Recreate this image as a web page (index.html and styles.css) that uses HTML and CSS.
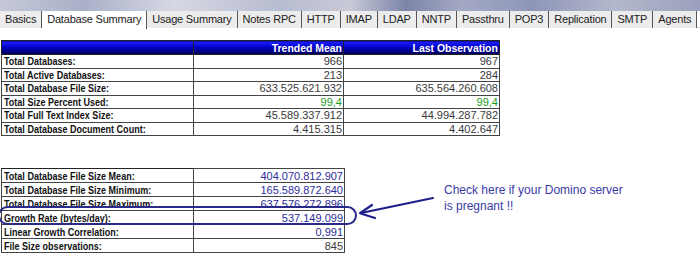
FILE: index.html
```html
<!DOCTYPE html>
<html lang="en">
<head>
    <meta charset="UTF-8">
    <title>Database Summary</title>
    <link rel="stylesheet" href="styles.css">
</head>
<body>
    <div class="banner">
        <ul class="tabs">
            <li>Basics</li>
            <li class="active">Database Summary</li>
            <li>Usage Summary</li>
            <li>Notes RPC</li>
            <li>HTTP</li>
            <li>IMAP</li>
            <li>LDAP</li>
            <li>NNTP</li>
            <li>Passthru</li>
            <li>POP3</li>
            <li>Replication</li>
            <li>SMTP</li>
            <li>Agents</li>
        </ul>
    </div>

    <div class="content">
        <table class="stats summary">
            <tr class="head">
                <th class="label"></th>
                <th class="mean"><span>Trended Mean</span></th>
                <th class="last"><span>Last Observation</span></th>
            </tr>
            <tr><td class="label"><span>Total Databases:</span></td><td>966</td><td>967</td></tr>
            <tr><td class="label"><span>Total Active Databases:</span></td><td>213</td><td>284</td></tr>
            <tr><td class="label"><span>Total Database File Size:</span></td><td>633.525.621.932</td><td>635.564.260.608</td></tr>
            <tr><td class="label"><span>Total Size Percent Used:</span></td><td class="ok">99,4</td><td class="ok">99,4</td></tr>
            <tr><td class="label"><span>Total Full Text Index Size:</span></td><td>45.589.337.912</td><td>44.994.287.782</td></tr>
            <tr><td class="label"><span>Total Database Document Count:</span></td><td>4.415.315</td><td>4.402.647</td></tr>
        </table>

        <table class="stats growth">
            <tr><td class="label"><span>Total Database File Size Mean:</span></td><td class="calc">404.070.812.907</td></tr>
            <tr><td class="label"><span>Total Database File Size Minimum:</span></td><td class="calc">165.589.872.640</td></tr>
            <tr><td class="label"><span>Total Database File Size Maximum:</span></td><td class="calc">637.576.272.896</td></tr>
            <tr><td class="label"><span>Growth Rate (bytes/day):</span></td><td class="calc">537.149.099</td></tr>
            <tr><td class="label"><span>Linear Growth Correlation:</span></td><td class="calc">0,991</td></tr>
            <tr><td class="label"><span>File Size observations:</span></td><td>845</td></tr>
        </table>

        <!-- hand drawn annotation over the second table -->
        <div class="ring"></div>
        <svg class="arrow" width="100" height="40" viewBox="0 0 100 40">
            <path d="M83 8 L11 23" stroke="#1e1e8a" stroke-width="2.2" fill="none" stroke-linecap="round"/>
            <path d="M22 15 L10 23.2 L25 28" stroke="#1e1e8a" stroke-width="2.2" fill="none" stroke-linecap="round" stroke-linejoin="round"/>
        </svg>
        <p class="note">Check here if your Domino server<br>is pregnant !!</p>
    </div>
</body>
</html>
```

FILE: styles.css
```css
/* General Styles */
body {
    margin: 0;
    background: #ffffff;
    font-family: "Liberation Sans", Arial, sans-serif;
    font-size: 11px;
    color: #3a3a3a;
}

/* Banner + tab strip */
.banner {
    height: 28px;
    padding-top: 11px;
    box-sizing: border-box;
    border-bottom: 1px solid #d4d4d4;
    background:
        linear-gradient(90deg, #c4c8d8 0%, #aab0c8 12%, #d6d8e4 25%, #b8bcd0 40%, #c8cad8 50%, #7c84a8 58%, #a4aac4 66%, #8e96b8 76%, #b4b8cc 88%, #9aa0bc 100%) top / 100% 11px no-repeat,
        #ffffff;
}

.tabs {
    display: flex;
    margin: 0;
    padding: 0;
    list-style: none;
    white-space: nowrap;
    overflow: hidden;
}

.tabs li {
    height: 17px;
    line-height: 17px;
    padding: 0 5px;
    letter-spacing: -0.2px;
    background: #ececec; /* Inactive tab */
    border-right: 1px solid #555;
    color: #222;
}

.tabs li.active {
    background: #ffffff;
    height: 18px;
}

/* Tables */
.content {
    position: relative;
    padding: 12px 0 0 1px;
}

.stats {
    border-collapse: collapse;
    border: 1px solid #222;
    table-layout: fixed;
}

.stats td,
.stats th {
    height: 12.5px;
    padding: 0 1px 0 2px;
    border: 1px solid #444;
    text-align: right;
    white-space: nowrap;
    line-height: 12px;
}

.stats tr + tr td {
    border-top-color: #8a8a8a;
}

.stats .label {
    width: 188px;
    text-align: left;
    font-weight: bold;
    color: #111;
    border-top-color: #222;
}

/* Condensed bold labels */
.stats .label span {
    display: inline-block;
    transform: scaleX(0.82);
    transform-origin: 0 50%;
}

.summary {
    width: 499px;
}

.summary .mean {
    width: 146px;
}

.summary .head th {
    height: 13px;
    color: #ffffff;
    font-weight: bold;
    border-color: #222;
    background: linear-gradient(#2020ff, #0000c8 45%, #000050);
}

.summary .head th span {
    display: inline-block;
    transform: scaleX(0.95);
    transform-origin: 100% 50%;
}

.ok {
    color: #1a9a1a; /* Green percentage */
}

.growth {
    width: 344px;
    margin-top: 32px;
}

.growth td {
    height: 13px;
}

.calc {
    color: #2c2c9a; /* Calculated values */
}

/* Annotation */
.ring {
    position: absolute;
    left: -2px;
    top: 178px;
    width: 355px;
    height: 15px;
    border: 2px solid #2a2a8c;
    border-radius: 10px;
}

.arrow {
    position: absolute;
    left: 350px;
    top: 162px;
}

.note {
    position: absolute;
    left: 444px;
    top: 154px;
    margin: 0;
    font-size: 12px;
    line-height: 16px;
    color: #3a3aa6;
}
```
